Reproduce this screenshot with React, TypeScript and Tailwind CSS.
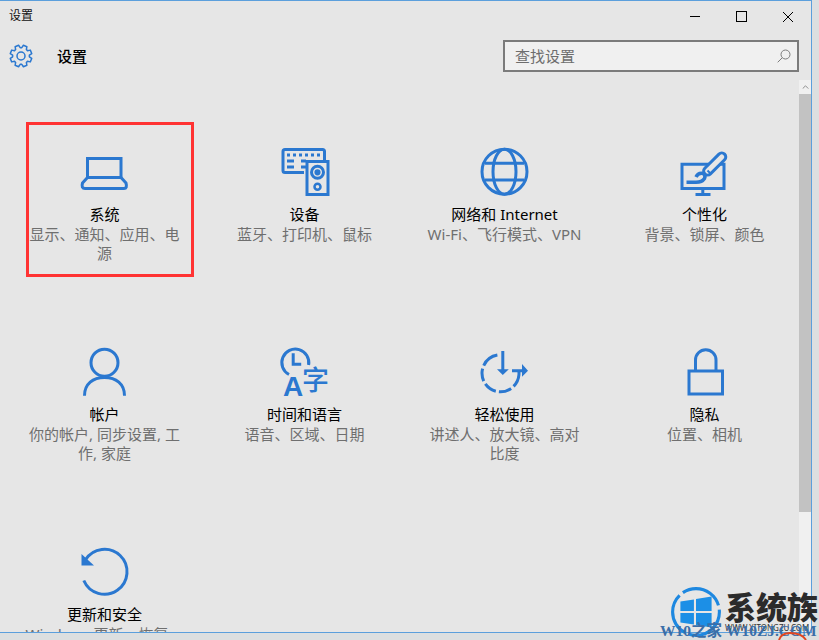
const font = { fontFamily: '"Noto Sans", "Noto Sans CJK SC", sans-serif' };

const B = '#2b78d0';
const BG = '#e6e6e6';

function Svg({ children }: { children: React.ReactNode }) {
  return (
    <svg viewBox="0 0 60 60" className="w-[60px] h-[60px] shrink-0" fill="none" stroke={B} strokeWidth={3}>
      {children}
    </svg>
  );
}

const Laptop = () => (
  <Svg>
    <path d="M12.5 37.5V18.5H46V37.5" />
    <path d="M12.5 37.5H46L51 43Q52.5 48.5 49 48.5H10Q6 48.5 7.5 43Z" />
  </Svg>
);

const Device = () => (
  <Svg>
    <path d="M29 32.5H10Q8 32.5 8 30.5V11.5Q8 9.5 10 9.5H47.5Q49.5 9.5 49.5 11.5V20" />
    <rect x="32" y="21.5" width="21" height="33" />
    <circle cx="42.5" cy="32.3" r="6" />
    <circle cx="42.5" cy="32.3" r="1.6" fill={B} />
    <circle cx="42.5" cy="46.7" r="3" strokeWidth={2.5} />
    <path d="M12 15H15M18 15H21M24 15H27M30 15H33M36 15H39M42 15H45M12 21H19M26 21H31M12 27H19M26 27H31" />
  </Svg>
);

const Globe = () => (
  <Svg>
    <circle cx="29.5" cy="31.7" r="22.5" />
    <ellipse cx="29.5" cy="31.7" rx="11.5" ry="22.5" />
    <path d="M10 23.3H49M10 40H49" />
  </Svg>
);

const Paint = () => (
  <Svg>
    <path d="M7 48.5V24.2H49V48.5Z" />
    <path d="M27.8 49V55M20.5 54.5H35.5" />
    <rect x="25.7" y="20" width="28" height="8" rx="4" fill={BG} transform="rotate(-45 39.7 24)" />
    <path d="M11.5 42.3H21Q27 42.3 29.5 38.5Q31 35 28 33.5Q23 32.5 21 37" strokeWidth={3.5} fill={BG} />
    <path d="M32.5 30.5L36 34" strokeWidth={2} />
  </Svg>
);

const Person = () => (
  <Svg>
    <circle cx="29.5" cy="22.7" r="13.5" />
    <path d="M9.5 55.7C9.5 44 18 37.5 29.5 37.5S49.5 44 49.5 55.7" />
  </Svg>
);

const TimeLang = () => (
  <Svg>
    <path d="M14 34.5A13.5 13.5 0 1 1 33.6 25" />
    <path d="M18.2 13.3V24.3H26.2" />
    <text x="18" y="55.7" textAnchor="middle" fontSize="28" fontWeight="700" fill={B} stroke="none" fontFamily="Liberation Sans, sans-serif">A</text>
    <text x="40.5" y="49.5" textAnchor="middle" fontSize="27" fontWeight="500" fill={B} stroke="none" fontFamily="Noto Sans CJK SC, sans-serif">字</text>
  </Svg>
);

const Ease = () => (
  <Svg>
    <circle cx="25.5" cy="33.3" r="18.5" pathLength={360} strokeDasharray="40 10 40 10 40 10 40 10 55 95" transform="rotate(5 25.5 33.3)" />
    <path d="M27.8 11V30M37 30.7H47" />
    <path d="M22 29.3H33.8L27.8 35ZM47 24V36.7L53 30.7Z" fill={B} stroke="none" />
  </Svg>
);

const Lock = () => (
  <Svg>
    <rect x="14" y="31" width="33.5" height="23" />
    <path d="M20.5 31V20A10.2 10.2 0 0 1 41 20V31" />
  </Svg>
);

const Update = () => (
  <Svg>
    <path d="M10.5 19.7A22.5 22.5 0 1 1 8.8 40.5" />
    <path d="M6.5 14V25.5H19Z" fill={B} stroke="none" />
  </Svg>
);

function gearPath() {
  const cx = 12;
  const cy = 12;
  let d = '';
  const teeth = 8;
  for (let i = 0; i < teeth; i++) {
    const a = (i / teeth) * Math.PI * 2 + Math.PI / 8;
    const pts: [number, number][] = [
      [8.4, a - 0.3],
      [11, a - 0.17],
      [11, a + 0.17],
      [8.4, a + 0.3],
    ];
    pts.forEach(([r, t], j) => {
      const x = (cx + r * Math.cos(t)).toFixed(2);
      const y = (cy + r * Math.sin(t)).toFixed(2);
      d += (i === 0 && j === 0 ? 'M' : 'L') + x + ' ' + y;
    });
  }
  return d + 'Z';
}

const items = [
  { icon: <Laptop />, title: '系统', desc: '显示、通知、应用、电源' },
  { icon: <Device />, title: '设备', desc: '蓝牙、打印机、鼠标' },
  { icon: <Globe />, title: '网络和 Internet', desc: 'Wi-Fi、飞行模式、VPN' },
  { icon: <Paint />, title: '个性化', desc: '背景、锁屏、颜色' },
  { icon: <Person />, title: '帐户', desc: '你的帐户, 同步设置, 工作, 家庭' },
  { icon: <TimeLang />, title: '时间和语言', desc: '语音、区域、日期' },
  { icon: <Ease />, title: '轻松使用', desc: '讲述人、放大镜、高对比度' },
  { icon: <Lock />, title: '隐私', desc: '位置、相机' },
  { icon: <Update />, title: '更新和安全', desc: 'Windows 更新、恢复、备份' },
];

export default function App() {
  return (
    <div className="relative w-[819px] h-[640px] overflow-hidden bg-[#dcdfe0]" style={font}>
      <div className="w-[812px] h-[633px] flex flex-col bg-[#e6e6e6] border-t border-r border-b border-[#5b9fdc] overflow-hidden">
        <div className="h-[31px] shrink-0 flex items-center justify-between">
          <span className="pl-[9px] pb-[2px] text-[12px] text-[#111]">设置</span>
          <div className="flex items-center pr-[18px] gap-[36px]">
            <div className="w-[10px] h-px bg-black" />
            <div className="w-[11px] h-[11px] border border-black" />
            <svg viewBox="0 0 10 10" className="w-[10px] h-[10px]" stroke="#000" strokeWidth={1}>
              <path d="M0 0L10 10M10 0L0 10" />
            </svg>
          </div>
        </div>
        <div className="h-[48px] shrink-0 flex items-start justify-between">
          <div className="flex items-center pl-[9px] pt-[12px]">
            <svg viewBox="0 0 24 24" className="w-[24px] h-[24px]" fill="none" stroke={B} strokeWidth={1.5}>
              <path d={gearPath()} strokeLinejoin="round" />
              <circle cx="12" cy="12" r="4" />
            </svg>
            <span className="ml-[24px] text-[15px] font-medium text-black">设置</span>
          </div>
          <div className="mr-[12px] mt-[8px] w-[296px] h-[32px] border-2 border-[#7b7b7b] bg-[#f0f0f0] flex items-center justify-between pl-[10px] pr-[6px]">
            <span className="text-[15px] text-[#6d6d6d]">查找设置</span>
            <svg viewBox="0 0 14 14" className="w-[14px] h-[14px]" fill="none" stroke="#7d7d7d" strokeWidth={1}>
              <circle cx="8.5" cy="5.5" r="4.5" />
              <path d="M5.3 8.7L0.7 13.3" />
            </svg>
          </div>
        </div>
        <div className="flex-1 min-h-0 flex">
          <div className="flex-1 min-w-0 overflow-hidden pt-[60px] pl-[24px]">
            <div className="grid grid-cols-[repeat(4,161px)] gap-x-[39px] auto-rows-[200px]">
              {items.map((it) => (
                <div key={it.title} className="flex flex-col items-center text-center">
                  {it.icon}
                  <div className="mt-[3px] text-[15px] leading-[22px] text-black whitespace-nowrap">{it.title}</div>
                  <div className="text-[15px] leading-[19px] text-[#6f6f6f]">{it.desc}</div>
                </div>
              ))}
            </div>
          </div>
          <div className="w-[12px] shrink-0 flex flex-col bg-[#f0f0f0]">
            <div className="h-[14px] flex items-center justify-center">
              <svg viewBox="0 0 8 5" className="w-[7px] h-[4px]" fill="none" stroke="#8a8a8a" strokeWidth={1.2}>
                <path d="M0.5 4.5L4 1L7.5 4.5" />
              </svg>
            </div>
            <div className="h-[418px] bg-[#c2c2c2]" />
          </div>
        </div>
      </div>

      <div className="absolute left-[26px] top-[122px] w-[168px] h-[155px] border-[3px] border-[#ff3333]" />

      <div className="absolute left-[670px] top-[586px] w-[149px] h-[54px] pointer-events-none">
        <svg viewBox="0 0 50 50" className="absolute left-0 top-0 w-[52px] h-[52px]" fill="none">
          <circle cx="25" cy="25" r="22.5" stroke="#1e88e0" strokeWidth={3} strokeDasharray="42 4" />
          <path d="M10 15L23 13V24H10ZM25 12.5L40 10V24H25ZM10 26H23V37L10 35ZM25 26H40V40L25 37.5Z" fill="#1c8fe6" />
        </svg>
        <span className="absolute left-[55px] top-[2px] text-[31px] leading-[36px] font-black text-[#2b2b2b] whitespace-nowrap" style={{ fontFamily: '"Noto Sans CJK SC", sans-serif' }}>系统族</span>
        <span className="absolute left-[55px] top-[37px] text-[8px] leading-[9px] text-[#333] whitespace-nowrap">WWW.XITONGZU.COM</span>
      </div>
      <span className="absolute left-[660px] top-[623px] text-[15.5px] leading-[16px] font-bold text-[#3a6ea8] whitespace-nowrap" style={{ fontFamily: '"Liberation Serif", "Noto Sans CJK SC", serif' }}>W10之家 W10ZJ.COM</span>
      <svg viewBox="0 0 30 8" className="absolute left-[778px] top-[632px] w-[30px] h-[8px]" fill="none" stroke="#e2451e" strokeWidth={2}>
        <path d="M1 8Q3 1 12 1Q24 1 28 8" />
      </svg>
    </div>
  );
}
